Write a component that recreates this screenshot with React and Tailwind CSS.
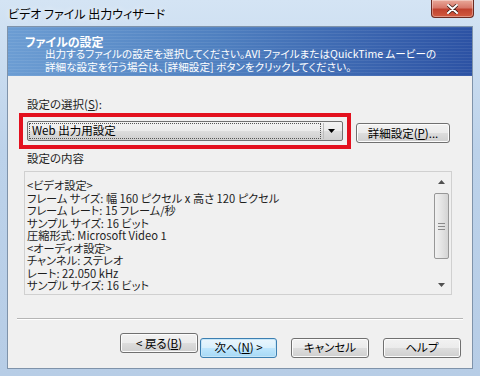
import { useState } from 'react'

const font = "font-['Meiryo_UI','Noto_Sans_CJK_JP',sans-serif] [font-feature-settings:'palt']"

function WinButton({ children, width, isDefault = false }) {
  return (
    <button
      className={
        isDefault
          ? 'h-[20px] rounded-[3px] border border-[#3c7fb1] bg-[linear-gradient(to_bottom,#eaf6fd_0%,#d9f0fc_50%,#bee6fd_51%,#a7d9f5_100%)] text-[11.5px] leading-none text-black shadow-[inset_0_0_0_1px_#c6e6f8]'
          : 'h-[20px] rounded-[3px] border border-[#707070] bg-[linear-gradient(to_bottom,#f2f2f2_0%,#ebebeb_50%,#dddddd_51%,#cfcfcf_100%)] text-[11.5px] leading-none text-black shadow-[inset_0_0_0_1px_#fcfcfc]'
      }
      style={{ width }}
    >
      {children}
    </button>
  )
}

function ScrollBar() {
  return (
    <div className="flex h-full w-[17px] flex-col items-center bg-[#f0f0f0]">
      {/* up arrow */}
      <div className="flex h-[17px] w-full items-center justify-center">
        <svg width="7" height="4" viewBox="0 0 7 4">
          <path d="M0 4 L3.5 0 L7 4 Z" fill="#505050" />
        </svg>
      </div>
      {/* thumb */}
      <div className="mt-[3px] flex h-[66px] w-[15px] flex-col items-center justify-center gap-[2px] rounded-[2px] border border-[#979797] bg-[linear-gradient(to_right,#f1f1f1,#e4e4e4_50%,#d4d4d4)]">
        <div className="h-px w-[7px] bg-[#8a8a8a]" />
        <div className="h-px w-[7px] bg-[#8a8a8a]" />
        <div className="h-px w-[7px] bg-[#8a8a8a]" />
      </div>
      <div className="flex-1" />
      {/* down arrow */}
      <div className="flex h-[17px] w-full items-center justify-center">
        <svg width="7" height="4" viewBox="0 0 7 4">
          <path d="M0 0 L7 0 L3.5 4 Z" fill="#505050" />
        </svg>
      </div>
    </div>
  )
}

const details = [
  '<ビデオ設定>',
  'フレーム サイズ: 幅 160 ピクセル x 高さ 120 ピクセル',
  'フレーム レート: 15 フレーム/秒',
  'サンプル サイズ: 16 ビット',
  '圧縮形式: Microsoft Video 1',
  '<オーディオ設定>',
  'チャンネル: ステレオ',
  'レート: 22.050 kHz',
  'サンプル サイズ: 16 ビット',
]

export default function App() {
  const [preset] = useState('Web 出力用設定')

  return (
    <div className={`flex h-[376px] w-[480px] flex-col overflow-hidden bg-[linear-gradient(to_bottom,#d4e4f4,#bcd2ea_40%,#b7cde6)] ${font}`}>
      {/* Title bar */}
      <div className="flex h-[26px] items-start justify-between">
        <div className="ml-[8px] mt-[6px] text-[12px] leading-[16px] text-black [text-shadow:0_0_6px_#ffffff]">
          ビデオ ファイル 出力ウィザード
        </div>
        <div className="mr-[6px] flex h-[18px] w-[43px] items-center justify-center rounded-b-[4px] border border-t-0 border-[#6b2a22] bg-[linear-gradient(to_bottom,#e9a99a,#d7786a_45%,#c0422f_55%,#d15a40)] shadow-[inset_0_0_0_1px_rgba(255,255,255,0.35)]">
          <svg width="11" height="10" viewBox="0 0 11 10">
            <path d="M1 1 L10 9 M10 1 L1 9" stroke="#3a1a14" strokeWidth="3.4" strokeLinecap="round" />
            <path d="M1 1 L10 9 M10 1 L1 9" stroke="#ffffff" strokeWidth="2" strokeLinecap="round" />
          </svg>
        </div>
      </div>

      {/* Client area */}
      <div className="flex flex-1 px-[7px] pb-[7px]">
        <div className="flex flex-1 flex-col border border-[#7f93aa] bg-[#f0f0f0]">
          {/* Header */}
          <div className="h-[49px] bg-[repeating-linear-gradient(to_bottom,rgba(255,255,255,0.07)_0px,rgba(255,255,255,0.07)_1px,transparent_1px,transparent_3px),linear-gradient(to_right,#6c9dd3,#4f80c0_45%,#2c52a4)] pl-[17px] pt-[8px] text-white">
            <div className="text-[12px] font-bold leading-[13px]">ファイルの設定</div>
            <div className="whitespace-nowrap pl-[20px] text-[10.6px] leading-[12.5px]">
              出力するファイルの設定を選択してください。AVI ファイルまたはQuickTime ムービーの
            </div>
            <div className="whitespace-nowrap pl-[20px] text-[10.6px] leading-[12.5px]">
              詳細な設定を行う場合は、[詳細設定] ボタンをクリックしてください。
            </div>
          </div>

          {/* Body */}
          <div className="flex flex-col pl-[16px] pr-[20px]">
            <div className="ml-[3px] mt-[20px] text-[11.5px] leading-[16px] text-[#1e1e1e]">
              設定の選択(<span className="underline">S</span>):
            </div>

            <div className="mt-[1px] flex items-center">
              {/* red highlight box */}
              <div className="-ml-[5px] border-[4px] border-[#e3101e] p-[4px]">
                <div className="flex h-[20px] w-[316px] items-center rounded-[2px] border border-[#707070] bg-[linear-gradient(to_bottom,#f2f2f2_0%,#ebebeb_50%,#dddddd_51%,#cfcfcf_100%)] pl-[1px] pr-[4px]">
                  <div className="flex h-[16px] flex-1 items-center border border-dotted border-[#555555] pl-[2px] text-[11.5px] leading-none text-black">
                    {preset}
                  </div>
                  <div className="ml-[2px] h-[16px] w-px bg-[#bcbcbc]" />
                  <div className="flex w-[14px] justify-center">
                    <svg width="7" height="4" viewBox="0 0 7 4">
                      <path d="M0 0 L7 0 L3.5 4 Z" fill="#000000" />
                    </svg>
                  </div>
                </div>
              </div>
              <div className="ml-[5px]">
                <WinButton width={94}>
                  詳細設定(<span className="underline">P</span>)...
                </WinButton>
              </div>
            </div>

            <div className="ml-[3px] mt-[1px] text-[11.5px] leading-[16px] text-[#1e1e1e]">設定の内容</div>

            <div className="mt-[5px] flex h-[124px] w-[428px] border border-[#d0d0d0] bg-[#f0f0f0] py-[1px] pr-[1px]">
              <div className="flex-1 pl-[2px] pt-[6px] text-[11.2px] leading-[12.5px] text-[#1e1e1e]">
                {details.map((line, i) => (
                  <div key={i} className="whitespace-pre">{line}</div>
                ))}
              </div>
              <ScrollBar />
            </div>
          </div>

          <div className="flex-1" />

          {/* Separator */}
          <div className="mx-[9px] h-px bg-[#b5b5b5] shadow-[0_1px_0_#ffffff]" />

          {/* Buttons */}
          <div className="mb-[10px] mt-[14px] flex justify-end pr-[11px]">
            <WinButton width={78}>
              &lt; 戻る(<span className="underline">B</span>)
            </WinButton>
            <div className="ml-[2px]">
              <WinButton width={77} isDefault>
                次へ(<span className="underline">N</span>) &gt;
              </WinButton>
            </div>
            <div className="ml-[14px]">
              <WinButton width={78}>キャンセル</WinButton>
            </div>
            <div className="ml-[14px]">
              <WinButton width={78}>ヘルプ</WinButton>
            </div>
          </div>
        </div>
      </div>
    </div>
  )
}
